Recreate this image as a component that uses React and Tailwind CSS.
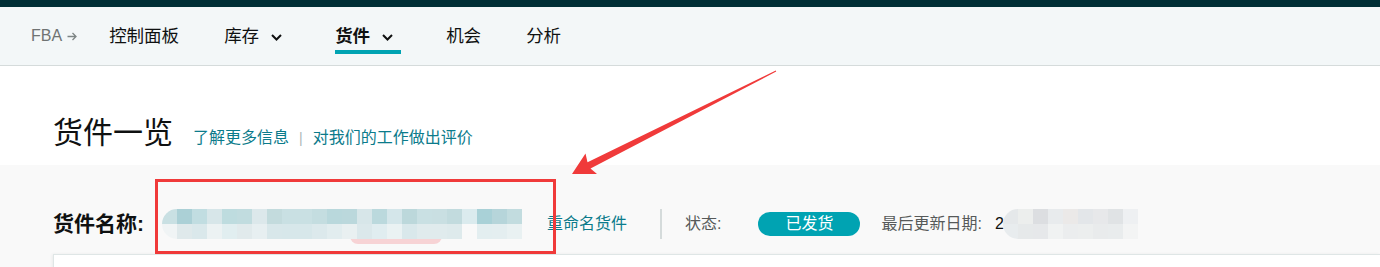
import React from 'react';

const nameBlur = [
  ['#c9e0e3', '#f0f4f5'], ['#abd0d6', '#dfe9eb'], ['#c1dde1', '#dae8eb'], ['#d7e6e9', '#ecf2f3'],
  ['#bedcdf', '#e1eef0'], ['#c1dcdf', '#e1eaec'], ['#dce8eb', '#e7eff1'], ['#c3dbdd', '#d8e7ea'],
  ['#c9e0e3', '#d7e7ea'], ['#c9e0e3', '#d7e7ea'], ['#c4dde0', '#dce9ec'], ['#b9d8dc', '#e2edef'],
  ['#bbd8dc', '#e9f0f1'], ['#d7e6e9', '#dbe8eb'], ['#bbd9dd', '#e0edf0'], ['#d4e6ea', '#eaf2f3'],
  ['#bcd8db', '#d9e8eb'], ['#c9e0e3', '#e0ebed'], ['#c9dfe2', '#e0ebed'], ['#c2dbde', '#deeaec'],
  ['#dbebee', '#f9f9f9'], ['#a9d1d7', '#e3eef0'], ['#b6d5da', '#e4eef0'], ['#c2dcdf', '#e9f1f2'],
];

const dateBlur = [
  ['#e5e8ea', '#e8ecee'], ['#eceeed', '#e6e9ea'], ['#dcdee1', '#e6e8ea'], ['#e8ebed', '#f0f2f2'],
  ['#ebe9e8', '#ebedee'], ['#e3e6e9', '#eceeee'], ['#e7e8ea', '#e9ebec'], ['#e0e3e5', '#e9eced'],
  ['#eef0f2', '#f3f4f4'],
];

// pixelated "redacted" strip
function Blur({ cells, className }) {
  return (
    <div className={`flex h-[30px] overflow-hidden rounded-l-[15px] ${className}`}>
      {cells.map(([top, bottom], i) => (
        <div key={i} className="flex w-[15px] shrink-0 flex-col">
          <div className="h-[15px]" style={{ background: top }} />
          <div className="h-[15px]" style={{ background: bottom }} />
        </div>
      ))}
    </div>
  );
}

function Chevron() {
  return (
    <svg width="11" height="7" viewBox="0 0 11 7" className="ml-[12px] mt-[3px]">
      <polyline points="1,1 5.5,5.5 10,1" fill="none" stroke="#0f1111" strokeWidth="2" />
    </svg>
  );
}

function NavItem({ label, dropdown, active }) {
  return (
    <div className={`relative flex h-full items-center ${dropdown ? 'pr-2' : ''}`}>
      <span className={`text-[17.5px] ${active ? 'font-bold' : ''}`}>{label}</span>
      {dropdown && <Chevron />}
      {active && <div className="absolute bottom-[11px] left-0 right-0 h-[4px] bg-[#00a3b2]" />}
    </div>
  );
}

export default function App() {
  return (
    <div
      className="relative h-[267px] w-[1380px] overflow-hidden bg-white text-[#0f1111]"
      style={{ fontFamily: '"Liberation Sans", "Noto Sans CJK SC", sans-serif' }}
    >
      {/* top strip */}
      <div className="h-[7px] bg-[#002f36]" />

      {/* nav */}
      <div className="flex h-[59px] items-center border-b border-[#d5dbdb] bg-[#f3f7f8] pl-[31px]">
        <span className="text-[16px] text-[#6f7373]">FBA</span>
        <svg width="10" height="9" viewBox="0 0 10 9" className="ml-[5px]">
          <path d="M0.5 4.5 H9 M5.5 1 L9 4.5 L5.5 8" fill="none" stroke="#7d8585" strokeWidth="1.3" />
        </svg>
        <div className="ml-[32px] flex h-full gap-[45px]">
          <NavItem label="控制面板" />
          <NavItem label="库存" dropdown />
          <NavItem label="货件" dropdown active />
          <NavItem label="机会" />
          <NavItem label="分析" />
        </div>
      </div>

      {/* page title */}
      <div className="h-[99px] pl-[53px] pt-[47px]">
        <div className="flex items-baseline">
          <h1 className="text-[30px] leading-[40px]">货件一览</h1>
          <a className="ml-[20px] text-[16px] text-[#0b7b8b]">了解更多信息</a>
          <span className="mx-[10px] text-[14px] text-[#aab7b8]">|</span>
          <a className="text-[16px] text-[#0b7b8b]">对我们的工作做出评价</a>
        </div>
      </div>

      {/* shipment header */}
      <div className="h-[102px] bg-[#f9f9f9] pt-[44px]">
        <div className="flex h-[30px] items-center pl-[53px]">
          <span className="text-[21px] font-bold">货件名称:</span>
          <div className="relative ml-[18px]">
            <div className="absolute left-[188px] top-[27px] h-[8px] w-[92px] rounded-b-full bg-[#f7d3d5]" />
            <Blur cells={nameBlur} className="relative" />
          </div>
          <a className="ml-[25px] text-[16px] text-[#0b7b8b]">重命名货件</a>
          <div className="ml-[33px] h-[30px] w-[2px] bg-[#d5dbdb]" />
          <span className="ml-[23px] text-[16px] text-[#565959]">状态:</span>
          <span className="ml-[37px] flex h-[24px] w-[102px] items-center justify-center rounded-full bg-[#00a3b2] text-[16px] text-white">
            已发货
          </span>
          <span className="ml-[21px] text-[16px] text-[#565959]">最后更新日期:</span>
          <span className="ml-[13px] text-[16px]">2</span>
          <Blur cells={dateBlur} className="-ml-[1px]" />
        </div>
        <div className="ml-[53px] mt-[15px] h-[20px] border-l border-t border-[#dfe6e6] bg-white shadow-[-1px_0_3px_rgba(0,0,0,0.06)]" />
      </div>

      {/* red annotation overlay */}
      <svg className="pointer-events-none absolute left-0 top-0" width="1380" height="267">
        <rect x="156.5" y="180.5" width="398" height="72" fill="none" stroke="#f03a3a" strokeWidth="3" />
        <polygon
          fill="#f03a3a"
          points="572,174 597,174 590.5,168.5 776.2,71.6 775.8,70.4 587.5,162.3 585.5,153.5"
        />
      </svg>
    </div>
  );
}
